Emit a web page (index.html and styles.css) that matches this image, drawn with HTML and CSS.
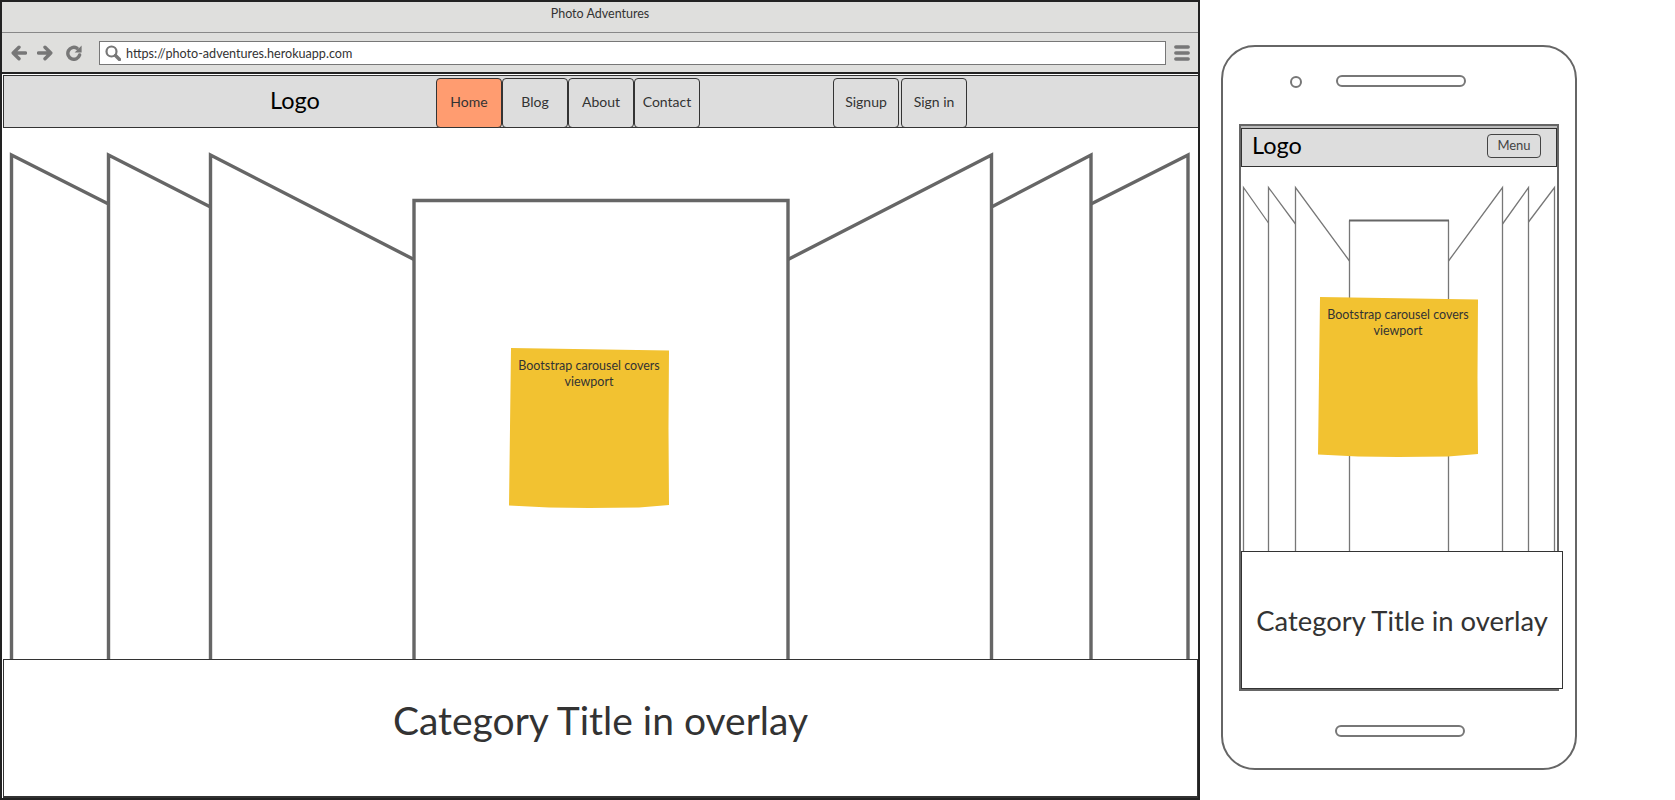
FILE: index.html
```html
<!DOCTYPE html>
<html lang="en">
<head>
<meta charset="utf-8">
<title>Photo Adventures wireframe</title>
<link rel="stylesheet" href="styles.css">
</head>
<body>
<main class="canvas">
  <section class="browser">
    <header class="titlebar">Photo Adventures</header>
    <div class="toolbar">
      <svg class="tool" viewBox="0 0 16 16"><path class="ico-line" d="M14.5 8H2.500M8 2.200 2.200 8 8 13.800"/></svg>
      <svg class="tool tool-forward" viewBox="0 0 16 16"><path class="ico-line" d="M1.500 8H13.500M8 2.200 13.800 8 8 13.800"/></svg>
      <svg class="tool tool-reload" viewBox="0 0 16 16"><path class="ico-line" d="M13.600 10A6 6 0 1 1 11 3.200"/><path class="ico-fill" d="M15.600 .6V7.600H8.600Z"/></svg>
      <div class="address">
        <svg class="search" viewBox="0 0 16 16"><circle class="ico-thin" cx="6.500" cy="6.500" r="5"/><path class="ico-line" d="M10.500 10.500 14.500 14.500"/></svg>
        <span class="url">https://photo-adventures.herokuapp.com</span>
      </div>
      <svg class="tool tool-menu" viewBox="0 0 16 16"><path class="ico-line" d="M1.800 2H14.200M1.800 8H14.200M1.800 14H14.200"/></svg>
    </div>
    <nav class="navbar">
      <div class="logo">Logo</div>
      <a class="tab tab-active">Home</a>
      <a class="tab">Blog</a>
      <a class="tab">About</a>
      <a class="tab">Contact</a>
      <a class="tab tab-signup">Signup</a>
      <a class="tab tab-signin">Sign in</a>
    </nav>
    <div class="stage">
      <svg class="drawing" width="1196" height="531" viewBox="2 128 1196 531">
        <path class="wire" d="M11.500 659V155L108.500 204"/>
        <path class="wire" d="M108.500 659V155L210.500 207"/>
        <path class="wire" d="M210.500 659V155L414 259.500"/>
        <path class="wire" d="M414 659V200.500H788V659"/>
        <path class="wire" d="M788 259.500 991.500 155V659"/>
        <path class="wire" d="M991.500 207 1091 155V659"/>
        <path class="wire" d="M1091 204 1188 155V659"/>
      </svg>
      <div class="sticky sticky-desktop">Bootstrap carousel covers viewport</div>
    </div>
    <div class="overlay">Category Title in overlay</div>
  </section>

  <section class="phone">
    <div class="phone-top">
      <span class="camera"></span>
      <span class="speaker"></span>
    </div>
    <div class="screen">
      <div class="screen-strip"></div>
      <nav class="phone-nav">
        <div class="phone-logo">Logo</div>
        <a class="menu-btn">Menu</a>
      </nav>
      <div class="stage phone-stage">
        <svg class="drawing" width="316" height="384" viewBox="1241 167 316 384">
          <path class="wire-thin" d="M1243.500 551V187.500L1268.500 223"/>
          <path class="wire-thin" d="M1268.500 551V187.500L1295.500 224"/>
          <path class="wire-thin" d="M1295.500 551V187.500L1349.500 261"/>
          <path class="wire-thin" d="M1349.500 551V220.500M1448.500 220.500V551"/>
          <path class="wire-top" d="M1349 220.500H1449"/>
          <path class="wire-thin" d="M1448.500 261 1502.500 187.500V551"/>
          <path class="wire-thin" d="M1502.500 224 1528.500 187.500V551"/>
          <path class="wire-thin" d="M1528.500 222 1554.500 187.500V551"/>
        </svg>
        <div class="sticky sticky-phone">Bootstrap carousel covers viewport</div>
      </div>
      <div class="overlay overlay-phone">Category Title in overlay</div>
    </div>
    <span class="speaker speaker-bottom"></span>
  </section>
</main>
</body>
</html>
```

FILE: styles.css
```css
* { box-sizing: border-box; }
html, body { margin: 0; padding: 0; background: #fff; }
body { font-family: "Lato", "Noto Sans", sans-serif; color: #333; overflow: hidden; }
.canvas { display: flex; align-items: flex-start; width: 1675px; height: 800px; }

.browser { width: 1200px; height: 800px; border: 2px solid #222; display: flex; flex-direction: column; flex: none; }
.titlebar { height: 31px; background: #dfdfdd; border-bottom: 1px solid #888; text-align: center; font-size: 12.500px; line-height: 23px; }
.toolbar { height: 41px; background: #dfdfdd; border-bottom: 2px solid #222; display: flex; align-items: center; padding-left: 9px; }
.tool { width: 16px; height: 16px; flex: none; }
.tool-forward { margin-left: 10px; }
.tool-reload { margin-left: 13px; }
.tool-menu { margin-left: 8px; }
.ico-line { fill: none; stroke: #777; stroke-width: 3.400; stroke-linecap: round; stroke-linejoin: round; }
.ico-fill { fill: #777; }
.ico-thin { fill: none; stroke: #777; stroke-width: 2.200; }
.address { width: 1067px; height: 24px; margin-left: 17px; flex: none; background: #fff; border: 1px solid #777; display: flex; align-items: center; padding-left: 5px; gap: 5px; }
.search { width: 16px; height: 16px; flex: none; }
.url { font-size: 12.600px; color: #333; white-space: nowrap; padding-top: 2px; }

.navbar { height: 53px; margin: 1px 0 0 1px; padding-top: 2px; background: #ddd; border: 1px solid #333; border-right: 0; display: flex; align-items: flex-start; flex: none; }
.logo { width: 432px; height: 46px; padding-left: 266px; font-size: 23.500px; line-height: 44px; color: #000; flex: none; }
.tab { width: 66px; height: 50px; border: 1px solid #333; border-radius: 4px; font-size: 14px; line-height: 45px; text-align: center; flex: none; color: #333; }
.tab-active { background: #ff9c70; }
.tab-signup { margin-left: 133px; }
.tab-signin { margin-left: 2px; }

.stage { position: relative; height: 531px; flex: none; }
.drawing { display: block; }
.wire { fill: none; stroke: #666; stroke-width: 3.400; stroke-linejoin: miter; }
.wire-thin { fill: none; stroke: #777; stroke-width: 1.300; }
.wire-top { fill: none; stroke: #666; stroke-width: 2; }

.sticky { position: absolute; width: 160px; height: 160px; padding: 10px 2px 0; background: #f2c231; font-size: 12.500px; line-height: 16px; text-align: center; color: #333;
  clip-path: polygon(2px 0, 160px 2.500px, 159.500px 80px, 160px 157px, 130px 159.500px, 80px 160px, 40px 159.500px, 0 157.500px); }
.sticky-desktop { left: 507px; top: 220px; }
.sticky-phone { left: 77px; top: 130px; }

.overlay { height: 139px; margin-left: 1px; width: 1195px; padding-bottom: 16px; flex: none; background: #fff; border: 1px solid #333; border-bottom-width: 2px; display: flex; align-items: center; justify-content: center; font-size: 39px; color: #333; }

.phone { width: 356px; height: 725px; margin: 45px 0 0 21px; border: 2px solid #666; border-radius: 34px; display: flex; flex-direction: column; flex: none; }
.phone-top { height: 77px; padding: 28px 0 0 67px; display: flex; align-items: flex-start; flex: none; }
.camera { width: 12px; height: 12px; margin-top: 1px; border: 2px solid #777; border-radius: 50%; flex: none; }
.speaker { display: block; width: 130px; height: 12px; margin-left: 34px; border: 2px solid #777; border-radius: 6px; flex: none; }
.speaker-bottom { margin: 34px 0 0 112px; }
.screen { width: 320px; height: 567px; margin-left: 16px; border: 2px solid #666; flex: none; }
.screen-strip { height: 2px; background: #bbb; }
.phone-nav { height: 39px; background: #ddd; border: 1px solid #333; display: flex; align-items: center; padding: 0 15px 0 10px; }
.phone-logo { font-size: 23.500px; color: #000; padding-bottom: 5px; }
.menu-btn { width: 54px; height: 24px; margin-left: auto; margin-bottom: 3px; border: 1px solid #444; border-radius: 4px; text-align: center; font-size: 13px; line-height: 21px; color: #444; }
.phone-stage { height: 384px; }
.overlay-phone { width: 322px; height: 138px; margin-left: 0; padding-bottom: 0; border-width: 1px; font-size: 27.400px; }
```
